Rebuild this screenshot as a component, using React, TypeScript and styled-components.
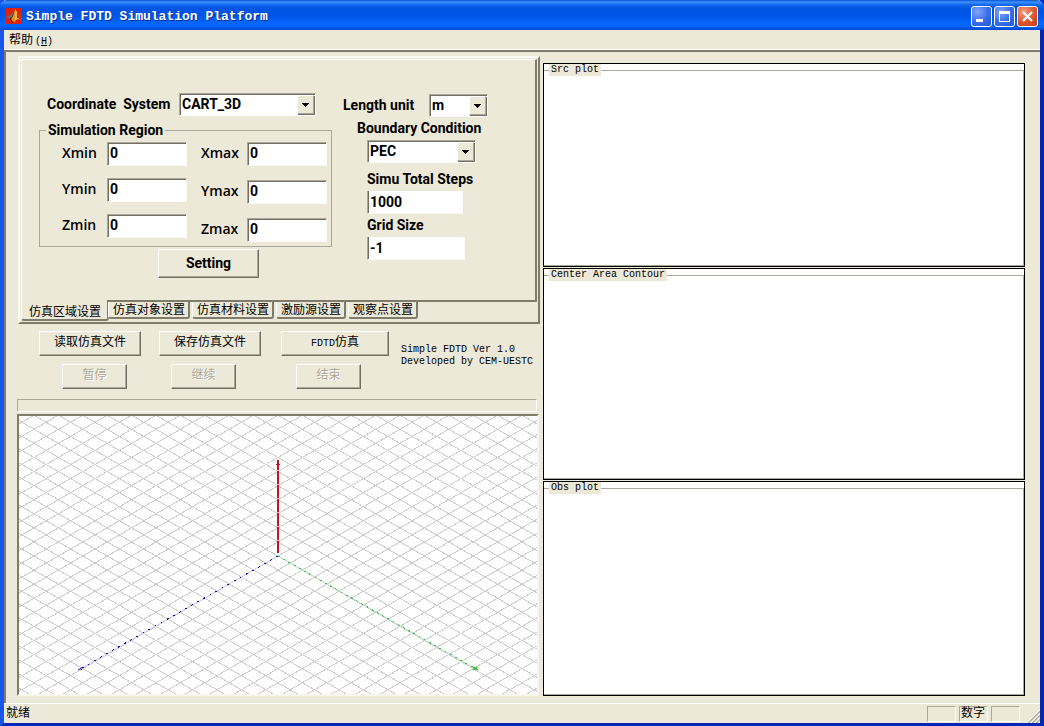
import React, { useState } from "react";
import styled, { createGlobalStyle } from "styled-components";

const face = "#ece9d8";
const shadow = "#7f7c6c";
const darkShadow = "#716f64";
const softShadow = "#aca899";
const cjk = '"Liberation Mono", "Noto Sans CJK SC", monospace';

const GlobalStyle = createGlobalStyle`
  * { box-sizing: border-box; }
  body { margin: 0; background: ${face}; color: #000; }
  button, input, select { font: inherit; color: inherit; margin: 0; border-radius: 0; }
`;

const Window = styled.div`
  display: flex;
  flex-direction: column;
  min-height: 100vh;
  background: ${face};
  font: 12px/16px ${cjk};
  border: solid;
  border-width: 0 4px 4px;
  border-color: #0831d9 #0426b4 #0426b4 #1656ea;
`;

const TitleBar = styled.header`
  display: flex;
  align-items: center;
  height: 30px;
  margin: 0 -4px;
  padding: 2px 6px 0;
  border-radius: 7px 7px 0 0;
  background: linear-gradient(
    #0a4fd0 0,
    #3d93ff 2px,
    #1265ee 5px,
    #0054e3 9px,
    #0055e8 16px,
    #0566fd 23px,
    #0462f8 27px,
    #0045c4 30px
  );
`;

const Title = styled.h1`
  flex: 1;
  margin: 0 0 0 4px;
  padding-top: 2px;
  color: #fff;
  font: bold 13px/16px ${cjk};
  text-shadow: 1px 1px 0 #0a2f96;
`;

const WindowButtons = styled.div`
  display: flex;
  gap: 2px;
`;

const WindowButton = styled.button<{ $close?: boolean }>`
  width: 21px;
  height: 21px;
  padding: 0;
  border: 1px solid #fff;
  border-radius: 3px;
  background: ${(p) =>
    p.$close
      ? "radial-gradient(circle at 30% 25%, #f09c80, #e1552d 55%, #c23c14)"
      : "radial-gradient(circle at 30% 25%, #7ea4f7, #3a6cea 55%, #2257d8)"};
  svg { display: block; }
`;

const MenuBar = styled.nav`
  height: 20px;
  padding: 3px 5px 0;
  border-bottom: 1px solid #fff;
`;

const MenuItem = styled.button`
  display: block;
  padding: 0;
  border: 0;
  background: none;
  line-height: 16px;
`;

const Key = styled.span`
  font-size: 10px;
  margin-left: 2px;
`;

const Client = styled.main`
  flex: 1;
  display: grid;
  grid-template-columns: minmax(0, 523fr) minmax(0, 482fr);
  gap: 3px;
  padding: 0 15px 7px 11px;
  border: solid ${shadow};
  border-width: 2px 0 0 2px;
`;

const LeftColumn = styled.div`
  display: flex;
  flex-direction: column;
  padding-top: 4px;
`;

const RightColumn = styled.div`
  display: flex;
  flex-direction: column;
  gap: 1px;
  padding-top: 11px;
`;

const TabFrame = styled.section`
  margin-left: 1px;
  padding: 1px 1px 0;
  border: 2px solid;
  border-color: #fbfaf4 ${shadow} ${shadow} #fbfaf4;
`;

const TabPage = styled.form`
  display: flex;
  gap: 11px;
  height: 243px;
  padding-left: 17px;
  border: solid;
  border-width: 1px 2px 2px 1px;
  border-color: #fff ${shadow} ${shadow} #fff;
  font: bold 14px/16px Roboto, "Liberation Sans", sans-serif;
`;

const RegionColumn = styled.div`
  width: 293px;
  padding-top: 33px;
`;

const OptionColumn = styled.div`
  padding-top: 34px;
`;

const FieldLine = styled.div<{ $indent?: number }>`
  display: flex;
  align-items: center;
  padding-left: ${(p) => p.$indent ?? 0}px;
  > label { padding-bottom: 2px; }
`;

const Label = styled.label<{ $width?: number }>`
  width: ${(p) => (p.$width ? p.$width + "px" : "auto")};
  white-space: pre;
`;

const AxisLabel = styled(Label)`
  font: 600 14px/16px "Open Sans", sans-serif;
`;

const StackedLabel = styled(Label)<{ $indent: number; $top: number }>`
  display: block;
  margin: ${(p) => p.$top}px 0 4px ${(p) => p.$indent}px;
`;

const SelectBox = styled.div<{ $width: number }>`
  display: grid;
  grid-template-columns: 1fr 17px;
  width: ${(p) => p.$width}px;
  height: 23px;
  padding: 1px;
  border: 1px solid;
  border-color: ${softShadow} #fff #fff ${softShadow};
  box-shadow: inset 1px 1px 0 ${darkShadow};
  background: #fff;
  select {
    grid-area: 1 / 1 / 2 / 3;
    width: 100%;
    padding: 0 0 2px 1px;
    border: 0;
    background: none;
    appearance: none;
    outline: 0;
  }
`;

const SelectArrow = styled.span`
  grid-area: 1 / 2;
  display: flex;
  align-items: center;
  justify-content: center;
  border: 1px solid;
  border-color: #fff ${softShadow} ${softShadow} #fff;
  box-shadow: 1px 1px 0 ${darkShadow};
  background: ${face};
  pointer-events: none;
`;

const TextInput = styled.input<{ $width: number; $flat?: boolean }>`
  width: ${(p) => p.$width}px;
  height: ${(p) => (p.$flat ? 23 : 24)}px;
  padding: ${(p) => (p.$flat ? "0 0 1px 2px" : "0 0 3px 2px")};
  border: solid;
  border-width: ${(p) => (p.$flat ? "0 1px 1px 1px" : "1px")};
  border-color: ${softShadow} #fbfaf4 #fbfaf4 ${softShadow};
  box-shadow: inset 1px ${(p) => (p.$flat ? 0 : 1)}px 0 ${darkShadow};
  background: #fff;
  outline: 0;
`;

const Indent = styled.div`
  padding-left: 24px;
`;

const Region = styled.fieldset`
  display: flex;
  gap: 14px;
  margin: 6px 0 2px;
  padding: 4px 4px 4px 6px;
  border: 1px solid ${softShadow};
  legend { padding: 0 2px; }
`;

const AxisColumn = styled.div<{ $gap: number; $indent?: number }>`
  display: flex;
  flex-direction: column;
  gap: ${(p) => p.$gap}px;
  padding-left: ${(p) => p.$indent ?? 0}px;
`;

const PushButton = styled.button<{ $width: number; $lead?: number; $height?: number }>`
  width: ${(p) => p.$width}px;
  height: ${(p) => p.$height ?? 25}px;
  margin-left: ${(p) => p.$lead ?? 0}px;
  padding: 0 0 1px;
  border: 1px solid;
  border-color: #fff ${darkShadow} ${darkShadow} #fff;
  box-shadow: inset -1px -1px 0 ${softShadow};
  background: ${face};
  &:disabled {
    color: ${softShadow};
    text-shadow: 1px 1px 0 #fff;
  }
`;

const Latin = styled.span`
  font-size: 10px;
`;

const TabStrip = styled.div`
  display: flex;
  align-items: flex-start;
  gap: 2px;
  height: 20px;
`;

const Tab = styled.button<{ $active: boolean }>`
  height: ${(p) => (p.$active ? 21 : 17)}px;
  margin-top: ${(p) => (p.$active ? -2 : 0)}px;
  margin-right: ${(p) => (p.$active ? -3 : 0)}px;
  padding: ${(p) => (p.$active ? "7px 6px 0 7px" : "3px 3px 0 4px")};
  border: solid;
  border-width: 0 2px 2px 1px;
  border-color: ${shadow} ${shadow} ${shadow} #fff;
  border-radius: 0 0 3px 3px;
  background: ${face};
  line-height: 12px;
`;

const Controls = styled.div`
  display: flex;
  gap: 12px;
  padding-top: 7px;
`;

const ButtonRows = styled.div`
  display: flex;
  flex-direction: column;
  gap: 8px;
  width: 372px;
`;

const ButtonRow = styled.div`
  display: flex;
`;

const Credits = styled.p`
  margin: 13px 0 0;
  font-size: 10px;
  line-height: 12px;
  white-space: nowrap;
`;

const Progress = styled.div`
  height: 13px;
  margin: 10px 3px 2px 0;
  border: 1px solid;
  border-color: ${softShadow} #fff #fff ${softShadow};
`;

const Viewport = styled.div`
  flex: 1;
  display: grid;
  min-height: 200px;
  margin-right: 1px;
  border: 2px solid;
  border-color: ${shadow} #f8f6ec #f8f6ec ${shadow};
  background: #fff;
  svg { width: 100%; height: 100%; min-height: 0; display: block; }
`;

const Plot = styled.section<{ $share: number }>`
  display: flex;
  flex: ${(p) => p.$share} 1 0;
  border: 1px solid #000;
  background: #fff;
`;

const PlotFrame = styled.fieldset`
  flex: 1;
  min-width: 0;
  margin: 0;
  padding: 0 5px;
  border: solid ${softShadow};
  border-width: 1px 1px 1px 0;
  legend {
    padding: 0 2px;
    background: ${face};
    font-size: 10px;
    line-height: 12px;
  }
`;

const StatusBar = styled.footer`
  display: flex;
  align-items: center;
  gap: 3px;
  height: 20px;
  padding: 1px 0 0 2px;
  border-top: 1px solid #fff;
`;

const StatusText = styled.span`
  flex: 1;
`;

const StatusCell = styled.span`
  width: 29px;
  height: 16px;
  padding-left: 1px;
  border: 1px solid;
  border-color: ${softShadow} #fff #fff ${softShadow};
  line-height: 14px;
  white-space: nowrap;
`;

const Logo = () => (
  <svg width="16" height="16" viewBox="0 0 16 16" aria-hidden="true">
    <rect width="16" height="16" fill="#e0200c" />
    <path d="M0 9L4 7L8 4L7 9L5 12L3 11Z" fill="#6f6a60" />
    <path d="M3 11L6 9L9 2L10 7L8 13L6 15L5 12Z" fill="#4a1606" />
    <path d="M5 11L7 8L9 1L11 4L10 11L7 14Z" fill="#e88a24" />
    <path d="M9 1L11 4L13 8L15 12L12 11L10 12L8 15L9 9Z" fill="#f7b22e" />
    <path d="M11 4L13 8L15 12L12 10L11 10Z" fill="#9c3a10" />
  </svg>
);

const Drop: React.FC<{ id: string; width: number; options: string[] }> = ({ id, width, options }) => (
  <SelectBox $width={width}>
    <select id={id}>
      {options.map((o) => (
        <option key={o}>{o}</option>
      ))}
    </select>
    <SelectArrow>
      <svg width="7" height="4" viewBox="0 0 7 4" shapeRendering="crispEdges" aria-hidden="true">
        <path d="M0 0H7L3.5 4Z" />
      </svg>
    </SelectArrow>
  </SelectBox>
);

const Axis: React.FC<{ name: string; width: number }> = ({ name, width }) => (
  <FieldLine>
    <AxisLabel htmlFor={name} $width={width}>{name}</AxisLabel>
    <TextInput id={name} $width={80} defaultValue="0" />
  </FieldLine>
);

const CX = 259;
const CY = 140;
const STEP = 24.4;
const SLOPE = 0.577;
const REACH = 600;

const Scene = () => {
  const lines = Array.from({ length: 61 }, (_, i) => CX + (i - 30) * STEP);
  return (
    <svg viewBox="0 0 518 278" preserveAspectRatio="xMidYMid slice" role="img" aria-label="3D view">
      <g stroke="#cdcdcd" strokeWidth="1" shapeRendering="crispEdges">
        {lines.map((x) => (
          <React.Fragment key={x}>
            <line x1={x - REACH} y1={CY - REACH * SLOPE} x2={x + REACH} y2={CY + REACH * SLOPE} />
            <line x1={x - REACH} y1={CY + REACH * SLOPE} x2={x + REACH} y2={CY - REACH * SLOPE} />
          </React.Fragment>
        ))}
      </g>
      <line x1={CX} y1={CY} x2="61" y2="253" stroke="#d4d4f8" />
      <line x1={CX} y1={CY} x2="61" y2="253" stroke="#10109c" strokeDasharray="2 5" shapeRendering="crispEdges" />
      <path d="M59 254L64 251M61 252L63 254" stroke="#1414b4" />
      <line x1={CX} y1={CY} x2="457" y2="253" stroke="#b4ecb4" />
      <line x1={CX} y1={CY} x2="457" y2="253" stroke="#48b858" strokeDasharray="2 4" shapeRendering="crispEdges" />
      <path d="M454 254L458 251M454 251L459 254" stroke="#30c830" strokeWidth="1.5" />
      <rect x="258" y="44" width="2" height="93" fill="#c8141c" />
      <rect x="257" y="48" width="4" height="1" fill="#c8141c" />
      <path
        d="M257 54.5h4M257 68.5h4M257 82.5h4M257 96.5h4M257 110.5h4M257 124.5h4"
        stroke="#f6c4b8"
      />
    </svg>
  );
};

const tabs = ["仿真区域设置", "仿真对象设置", "仿真材料设置", "激励源设置", "观察点设置"];
const plots = [
  { title: "Src plot", share: 204 },
  { title: "Center Area Contour", share: 212 },
  { title: "Obs plot", share: 215 },
];

export default function App() {
  const [active, setActive] = useState(0);
  return (
    <Window>
      <GlobalStyle />
      <TitleBar>
        <Logo />
        <Title>Simple FDTD Simulation Platform</Title>
        <WindowButtons>
          <WindowButton aria-label="Minimize">
            <svg width="19" height="19" viewBox="0 0 19 19">
              <rect x="4" y="12" width="7" height="3" fill="#fff" />
            </svg>
          </WindowButton>
          <WindowButton aria-label="Maximize">
            <svg width="19" height="19" viewBox="0 0 19 19">
              <path d="M4 4H15V15H4ZM5 7V14H14V7Z" fill="#fff" fillRule="evenodd" />
            </svg>
          </WindowButton>
          <WindowButton aria-label="Close" $close>
            <svg width="19" height="19" viewBox="0 0 19 19">
              <path d="M5 5L14 14M14 5L5 14" stroke="#fff" strokeWidth="2.2" />
            </svg>
          </WindowButton>
        </WindowButtons>
      </TitleBar>
      <MenuBar>
        <MenuItem>
          帮助<Key>(<u>H</u>)</Key>
        </MenuItem>
      </MenuBar>
      <Client>
        <LeftColumn>
          <TabFrame>
            <TabPage onSubmit={(e) => e.preventDefault()}>
              <RegionColumn>
                <FieldLine $indent={8}>
                  <Label htmlFor="coord" $width={132}>{"Coordinate  System"}</Label>
                  <Drop id="coord" width={137} options={["CART_3D"]} />
                </FieldLine>
                <Region>
                  <legend>Simulation Region</legend>
                  <AxisColumn $gap={12} $indent={16}>
                    <Axis name="Xmin" width={45} />
                    <Axis name="Ymin" width={45} />
                    <Axis name="Zmin" width={45} />
                  </AxisColumn>
                  <AxisColumn $gap={14}>
                    <Axis name="Xmax" width={46} />
                    <Axis name="Ymax" width={46} />
                    <Axis name="Zmax" width={46} />
                  </AxisColumn>
                </Region>
                <PushButton type="submit" $width={101} $height={29} $lead={119}>Setting</PushButton>
              </RegionColumn>
              <OptionColumn>
                <FieldLine>
                  <Label htmlFor="unit" $width={86}>Length unit</Label>
                  <Drop id="unit" width={59} options={["m"]} />
                </FieldLine>
                <StackedLabel htmlFor="boundary" $indent={14} $top={3}>Boundary Condition</StackedLabel>
                <Indent>
                  <Drop id="boundary" width={109} options={["PEC"]} />
                </Indent>
                <StackedLabel htmlFor="steps" $indent={24} $top={8}>Simu Total Steps</StackedLabel>
                <Indent>
                  <TextInput id="steps" $width={96} $flat defaultValue="1000" />
                </Indent>
                <StackedLabel htmlFor="grid" $indent={24} $top={3}>Grid Size</StackedLabel>
                <Indent>
                  <TextInput id="grid" $width={98} $flat defaultValue="-1" />
                </Indent>
              </OptionColumn>
            </TabPage>
            <TabStrip role="tablist">
              {tabs.map((t, i) => (
                <Tab key={t} role="tab" aria-selected={i === active} $active={i === active} onClick={() => setActive(i)}>
                  {t}
                </Tab>
              ))}
            </TabStrip>
          </TabFrame>
          <Controls>
            <ButtonRows>
              <ButtonRow>
                <PushButton $width={102} $lead={22}>读取仿真文件</PushButton>
                <PushButton $width={102} $lead={18}>保存仿真文件</PushButton>
                <PushButton $width={108} $lead={20}><Latin>FDTD</Latin>仿真</PushButton>
              </ButtonRow>
              <ButtonRow>
                <PushButton $width={65} $lead={45} disabled>暂停</PushButton>
                <PushButton $width={65} $lead={44} disabled>继续</PushButton>
                <PushButton $width={65} $lead={60} disabled>结束</PushButton>
              </ButtonRow>
            </ButtonRows>
            <Credits>
              Simple FDTD Ver 1.0
              <br />
              Developed by CEM-UESTC
            </Credits>
          </Controls>
          <Progress role="progressbar" aria-label="Progress" aria-valuenow={0} />
          <Viewport>
            <Scene />
          </Viewport>
        </LeftColumn>
        <RightColumn>
          {plots.map((p) => (
            <Plot key={p.title} $share={p.share}>
              <PlotFrame>
                <legend>{p.title}</legend>
              </PlotFrame>
            </Plot>
          ))}
        </RightColumn>
      </Client>
      <StatusBar>
        <StatusText>就绪</StatusText>
        <StatusCell />
        <StatusCell>数字</StatusCell>
        <StatusCell />
        <svg width="17" height="17" viewBox="0 0 17 17" aria-hidden="true">
          <path d="M5 17L17 5M9 17L17 9M13 17L17 13" stroke={softShadow} strokeWidth="1.6" />
          <path d="M4 17L17 4M8 17L17 8M12 17L17 12" stroke="#fff" strokeWidth="0.8" />
        </svg>
      </StatusBar>
    </Window>
  );
}
